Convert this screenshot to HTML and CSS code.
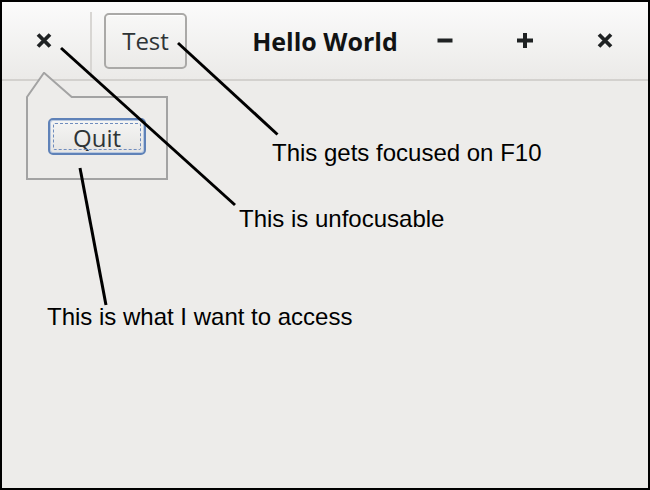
FILE: index.html
```html
<!DOCTYPE html>
<html lang="en">
<head>
<meta charset="utf-8">
<title>Hello World</title>
<link rel="stylesheet" href="styles.css">
</head>
<body>
<div class="window">
  <header class="headerbar">
    <div class="hb-start">
      <button class="icon-btn close-left" aria-label="Close">
        <svg width="16" height="15" viewBox="0 0 16 15"><path d="M2 1.5 L14 13.5 M14 1.5 L2 13.5" stroke="#1f2223" stroke-width="3.8" fill="none"/></svg>
      </button>
      <span class="sep"></span>
      <button class="btn test-btn">Test</button>
    </div>
    <div class="title">Hello World</div>
    <div class="hb-end">
      <button class="icon-btn" aria-label="Minimize">
        <svg width="16" height="15" viewBox="0 0 16 15"><rect x="0.5" y="5.5" width="15" height="4" fill="#1f2223"/></svg>
      </button>
      <button class="icon-btn" aria-label="Maximize">
        <svg width="16" height="15" viewBox="0 0 16 15"><rect x="0" y="5.5" width="16" height="4" fill="#1f2223"/><rect x="6" y="0" width="4" height="15" fill="#1f2223"/></svg>
      </button>
      <button class="icon-btn" aria-label="Close">
        <svg width="16" height="15" viewBox="0 0 16 15"><path d="M2 1.5 L14 13.5 M14 1.5 L2 13.5" stroke="#1f2223" stroke-width="3.8" fill="none"/></svg>
      </button>
    </div>
  </header>
  <main class="content"></main>

  <div class="popover">
    <svg class="popover-frame" width="142" height="108" viewBox="0 0 142 108"><path d="M1 107 L1 25 L18 0.8 L45.7 25 L141 25 L141 107 Z" fill="#edecea" stroke="#a3a3a3" stroke-width="2"/></svg>
    <button class="btn quit-btn">Quit</button>
  </div>

  <svg class="annotations" width="650" height="490" viewBox="0 0 650 490">
    <g stroke="#000" stroke-width="3" fill="none">
      <line x1="61" y1="48" x2="235" y2="205"/>
      <line x1="178" y1="43" x2="277.5" y2="134.5"/>
      <line x1="80" y1="168" x2="106" y2="305"/>
    </g>
    <g class="note">
      <text x="272" y="161">This gets focused on F10</text>
      <text x="239" y="227">This is unfocusable</text>
      <text x="47" y="325">This is what I want to access</text>
    </g>
  </svg>
</div>
</body>
</html>
```

FILE: styles.css
```css
html, body {
  margin: 0;
  padding: 0;
  background: #edecea;
}

.window {
  position: relative;
  width: 650px;
  height: 490px;
  box-sizing: border-box;
  border: 2px solid #000;
  background: #edecea;
  display: flex;
  flex-direction: column;
  font-family: "Open Sans", "DejaVu Sans", sans-serif;
  color: #2e3436;
}

.headerbar {
  height: 77px;
  flex: none;
  border-bottom: 2px solid #d3d1ce;
  background: linear-gradient(#fbfbfb, #ebeae8);
  display: grid;
  grid-template-columns: 1fr auto 1fr;
  align-items: center;
}

.hb-start {
  display: flex;
  align-items: center;
  height: 100%;
}

.hb-end {
  display: flex;
  justify-content: flex-end;
  align-items: center;
  height: 100%;
  padding-right: 3px;
}

.icon-btn {
  border: none;
  background: none;
  padding: 0;
  margin: 0;
  width: 80px;
  height: 100%;
  display: flex;
  align-items: center;
  justify-content: center;
}

.close-left {
  width: 83px;
}

.sep {
  width: 2px;
  align-self: stretch;
  margin: 10px 0 1px 5px;
  background: #d8d6d3;
}

.btn {
  font-family: "Open Sans", "DejaVu Sans", sans-serif;
  font-size: 24px;
  line-height: 1;
  color: #2e3436;
  padding: 0;
  margin: 0;
  box-sizing: border-box;
}

.test-btn {
  margin-left: 12px;
  width: 83px;
  height: 56px;
  border: 2px solid #aaa9a7;
  border-radius: 5px;
  background: linear-gradient(#f8f8f7, #ebeae8);
  box-shadow: inset 0 1px 0 #ffffff;
}

.title {
  font-weight: 700;
  font-size: 25px;
  line-height: 1;
  color: #111314;
  white-space: nowrap;
  padding-top: 1px;
}

.content {
  flex: 1;
}

.popover {
  position: absolute;
  left: 24px;
  top: 70px;
  width: 142px;
  height: 108px;
  box-sizing: border-box;
  padding: 46px 0 0 22px;
}

.popover-frame {
  position: absolute;
  left: 0;
  top: 0;
}

.quit-btn {
  position: relative;
  width: 98px;
  height: 37px;
  padding-top: 2px;
  border: 2px solid #5f82b8;
  border-radius: 5px;
  background: linear-gradient(#f5f5f4, #e6e5e3);
  box-shadow: inset 0 0 0 1px #b8c8e0;
}

.quit-btn::after {
  content: "";
  position: absolute;
  inset: 3px;
  border: 1px dashed #6f8cbd;
  border-radius: 2px;
  pointer-events: none;
}

.annotations {
  position: absolute;
  left: -2px;
  top: -2px;
  pointer-events: none;
}

.note text {
  font-family: "Liberation Sans", Arial, sans-serif;
  font-size: 24px;
  fill: #000;
}
```
